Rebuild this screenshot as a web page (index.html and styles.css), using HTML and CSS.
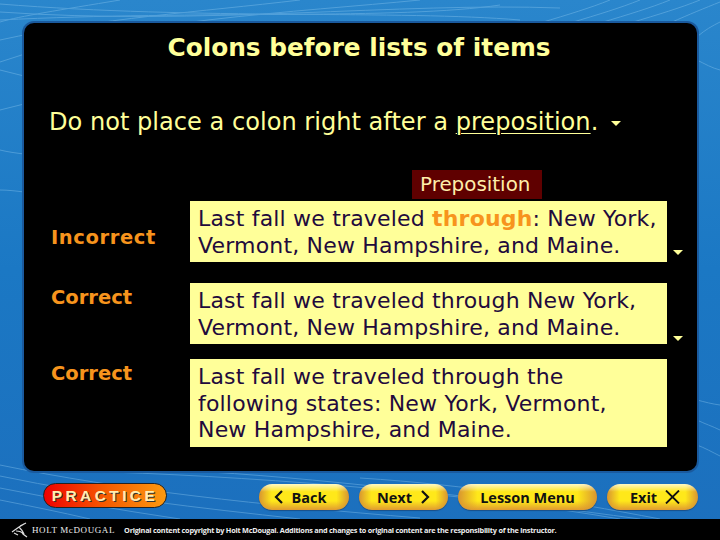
FILE: index.html
```html
<!DOCTYPE html>
<html lang="en">
  <head>
    <meta charset="UTF-8" />
    <title>Colons before lists of items</title>
    <link rel="stylesheet" href="styles.css">
  </head>
  <body>
    <div class="slide">
      <!-- background swoosh lines -->
      <svg class="lines" width="720" height="540" viewBox="0 0 720 540" fill="none" stroke="#8cc8f0" stroke-width="1" opacity="0.4">
        <path d="M0 465 C120 490 260 505 420 518" />
        <path d="M0 476 C100 497 200 508 300 519" />
        <path d="M0 488 C60 500 120 510 180 519" />
        <path d="M0 500 C30 506 60 512 90 519" />
        <path d="M110 472 C280 478 480 495 620 519" />
        <path d="M210 472 C340 480 500 500 640 519" />
        <path d="M360 478 C470 485 560 500 660 519" />
        <path d="M0 4 C200 20 400 10 520 20" />
        <path d="M0 12 C200 26 400 2 560 8" />
        <path d="M0 20 C200 10 400 20 500 5" />
        <path d="M120 0 C60 10 20 16 0 22" />
        <path d="M300 0 C200 12 100 18 0 40" />
        <path d="M420 0 C300 12 120 20 0 62" />
        <path d="M540 23 C570 14 590 8 610 0" />
        <path d="M570 23 C600 14 620 8 640 0" />
        <path d="M600 23 C630 14 650 8 670 0" />
        <path d="M630 23 C660 14 680 8 700 0" />
        <path d="M670 23 C690 14 705 8 720 2" />
        <path d="M698 36 C705 30 712 26 720 22" />
        <path d="M0 70 C8 72 16 74 24 76" />
        <path d="M0 110 C8 108 16 106 24 104" />
        <path d="M0 150 C8 152 16 153 24 154" />
        <path d="M0 190 C8 190 16 191 24 192" />
        <path d="M697 60 C705 64 712 68 720 70" />
        <path d="M697 400 C705 402 712 404 720 405" />
        <path d="M697 420 C705 424 712 426 720 430" />
        <path d="M697 445 C705 448 712 452 720 456" />
      </svg>

      <div class="panel">
        <h1 class="title">Colons before lists of items</h1>
        <p class="intro">Do not place a colon right after a <span class="under">preposition</span>. <span class="arrow intro-arrow"></span></p>
        <div class="term-row"><span class="term">Preposition</span></div>

        <div class="row first">
          <div class="label wide">Incorrect</div>
          <div class="box">Last fall we traveled <b class="hot">through</b>: New York,<br>Vermont, New Hampshire, and Maine.</div>
          <span class="arrow"></span>
        </div>
        <div class="row second">
          <div class="label">Correct</div>
          <div class="box">Last fall we traveled through New York,<br>Vermont, New Hampshire, and Maine.</div>
          <span class="arrow"></span>
        </div>
        <div class="row third">
          <div class="label">Correct</div>
          <div class="box">Last fall we traveled through the<br>following states: New York, Vermont,<br>New Hampshire, and Maine.</div>
        </div>
      </div>

      <div class="nav">
        <div class="practice">PRACTICE</div>
        <div class="buttons">
          <div class="btn back">
            <svg width="10" height="14" viewBox="0 0 10 14" fill="none" stroke="#111" stroke-width="2.2"><path d="M8 1 L2 7 L8 13" /></svg>
            Back
          </div>
          <div class="btn next">
            Next
            <svg width="10" height="14" viewBox="0 0 10 14" fill="none" stroke="#111" stroke-width="2.2"><path d="M2 1 L8 7 L2 13" /></svg>
          </div>
          <div class="btn menu">Lesson Menu</div>
          <div class="btn exit">
            Exit
            <svg width="15" height="14" viewBox="0 0 15 14" fill="none" stroke="#111" stroke-width="1.8"><path d="M1 0.5 L14 13.5 M14 0.5 L1 13.5" /></svg>
          </div>
        </div>
      </div>

      <div class="footer">
        <svg width="18" height="16" viewBox="0 0 18 16" fill="none" stroke="#ddd" stroke-width="1.2">
          <path d="M1 10 L8 5 L13 2 M9 4 L15 1 M5 9 C9 9 11 10 12 12 L16 15 M8 5 C10 7 12 9 13 12 M3 11 L7 13" />
        </svg>
        <span class="brand">HOLT McDOUGAL</span>
        <span class="legal">Original content copyright by Holt McDougal. Additions and changes to original content are the responsibility of the instructor.</span>
      </div>
    </div>
  </body>
</html>
```

FILE: styles.css
```css
body {
  margin: 0;
  background-color: #000;
}
.slide {
  position: relative;
  width: 720px;
  height: 540px;
  overflow: hidden;
  display: flex;
  flex-direction: column;
  background: linear-gradient(180deg, #2a86cc 0%, #1b78c4 50%, #1c6fbd 100%);
  font-family: "DejaVu Sans", Verdana, sans-serif;
}
.lines {
  position: absolute;
  left: 0;
  top: 0;
}
.panel {
  position: relative;
  box-sizing: border-box;
  width: 673px;
  height: 448px;
  margin: 23px 0 0 24px;
  padding: 10px 30px 0 27px;
  background-color: #000;
  border-radius: 10px;
  box-shadow: 0 0 0 2px #1a5a9e;
  color: #ffff99;
}
.title {
  margin: 0;
  font-size: 24.8px;
  line-height: 30px;
  font-weight: bold;
  text-align: center;
}
.intro {
  margin: 44px 0 0 -2px;
  font-size: 24.1px;
  font-weight: 400;
  line-height: 30px;
  white-space: nowrap;
}
.under {
  text-decoration: underline;
  text-underline-offset: 3px;
  text-decoration-thickness: 1px;
}
.arrow {
  display: inline-block;
  flex: none;
  width: 0;
  height: 0;
  border-left: 5px solid transparent;
  border-right: 5px solid transparent;
  border-top: 5px solid #ffff99;
}
.intro-arrow {
  margin-left: 5px;
  vertical-align: 4px;
}
.term-row {
  margin: 33px 0 0 361px;
  height: 29px;
}
.term {
  display: block;
  width: 130px;
  box-sizing: border-box;
  height: 29px;
  padding-left: 8px;
  background-color: #5f0000;
  color: #ffeeaa;
  font-size: 19.9px;
  line-height: 29px;
}
.row {
  display: flex;
  align-items: flex-start;
}
.row.first {
  margin-top: 2px;
}
.row.second {
  margin-top: 21px;
}
.row.third {
  margin-top: 15px;
}
.label {
  flex: none;
  width: 139px;
  padding-top: 2px;
  color: #f7941d;
  font-size: 19.5px;
  font-weight: bold;
  line-height: 26px;
}
.label.wide {
  margin-top: 22px;
  letter-spacing: 0.6px;
}
.box {
  flex: none;
  box-sizing: border-box;
  width: 477px;
  padding: 5px 0 3px 8px;
  background-color: #ffff99;
  color: #220a3c;
  font-size: 22px;
  letter-spacing: 0.18px;
  line-height: 26.5px;
  white-space: nowrap;
}
.hot {
  color: #f7941d;
}
.row .arrow {
  align-self: flex-end;
  margin: 0 0 7px 6px;
}
.row.second .arrow {
  margin-bottom: 3px;
}
.nav {
  position: relative;
  display: flex;
  justify-content: space-between;
  align-items: flex-start;
  margin-top: 12px;
  padding: 0 22px 0 43px;
}
.practice {
  box-sizing: border-box;
  width: 124px;
  height: 25px;
  border: 1px solid #222;
  border-radius: 13px;
  background: linear-gradient(90deg, #f00000 0%, #f55a00 50%, #fd9a10 100%);
  color: #ffeeb0;
  font-family: "Liberation Sans", Arial, sans-serif;
  font-size: 15.5px;
  font-weight: bold;
  line-height: 23px;
  letter-spacing: 3.4px;
  text-align: center;
  text-shadow: 1px 1px 0 #333;
}
.buttons {
  display: flex;
  gap: 10px;
  margin-top: 1px;
}
.btn {
  box-sizing: border-box;
  height: 26px;
  display: flex;
  align-items: center;
  justify-content: center;
  gap: 8px;
  border-radius: 13px;
  background:
    linear-gradient(180deg, rgba(255, 255, 255, 0.75) 0%, rgba(255, 255, 255, 0) 30%),
    linear-gradient(90deg, #d89430 0%, rgba(255, 232, 20, 0) 14%, rgba(255, 232, 20, 0) 86%, #d89430 100%),
    linear-gradient(180deg, #ffe81a 0%, #ffe81a 65%, #e09a30 100%);
  box-shadow: 0 1px 1px #1a4f88;
  color: #111;
  font-family: "Open Sans", sans-serif;
  font-size: 14.5px;
  font-weight: 700;
}
.back {
  width: 90px;
  padding-right: 8px;
}
.next {
  width: 89px;
}
.menu {
  width: 139px;
}
.exit {
  width: 91px;
  padding-left: 5px;
}
.footer {
  position: relative;
  margin-top: auto;
  height: 21px;
  display: flex;
  align-items: center;
  padding-left: 11px;
  background-color: #000;
  color: #eee;
}
.brand {
  margin-left: 3px;
  font-family: "Liberation Serif", serif;
  font-size: 9px;
  letter-spacing: 0.6px;
  white-space: nowrap;
}
.legal {
  margin-left: 9px;
  font-family: "Open Sans", sans-serif;
  font-size: 7.3px;
  font-weight: 700;
  letter-spacing: -0.23px;
  white-space: nowrap;
}
```
